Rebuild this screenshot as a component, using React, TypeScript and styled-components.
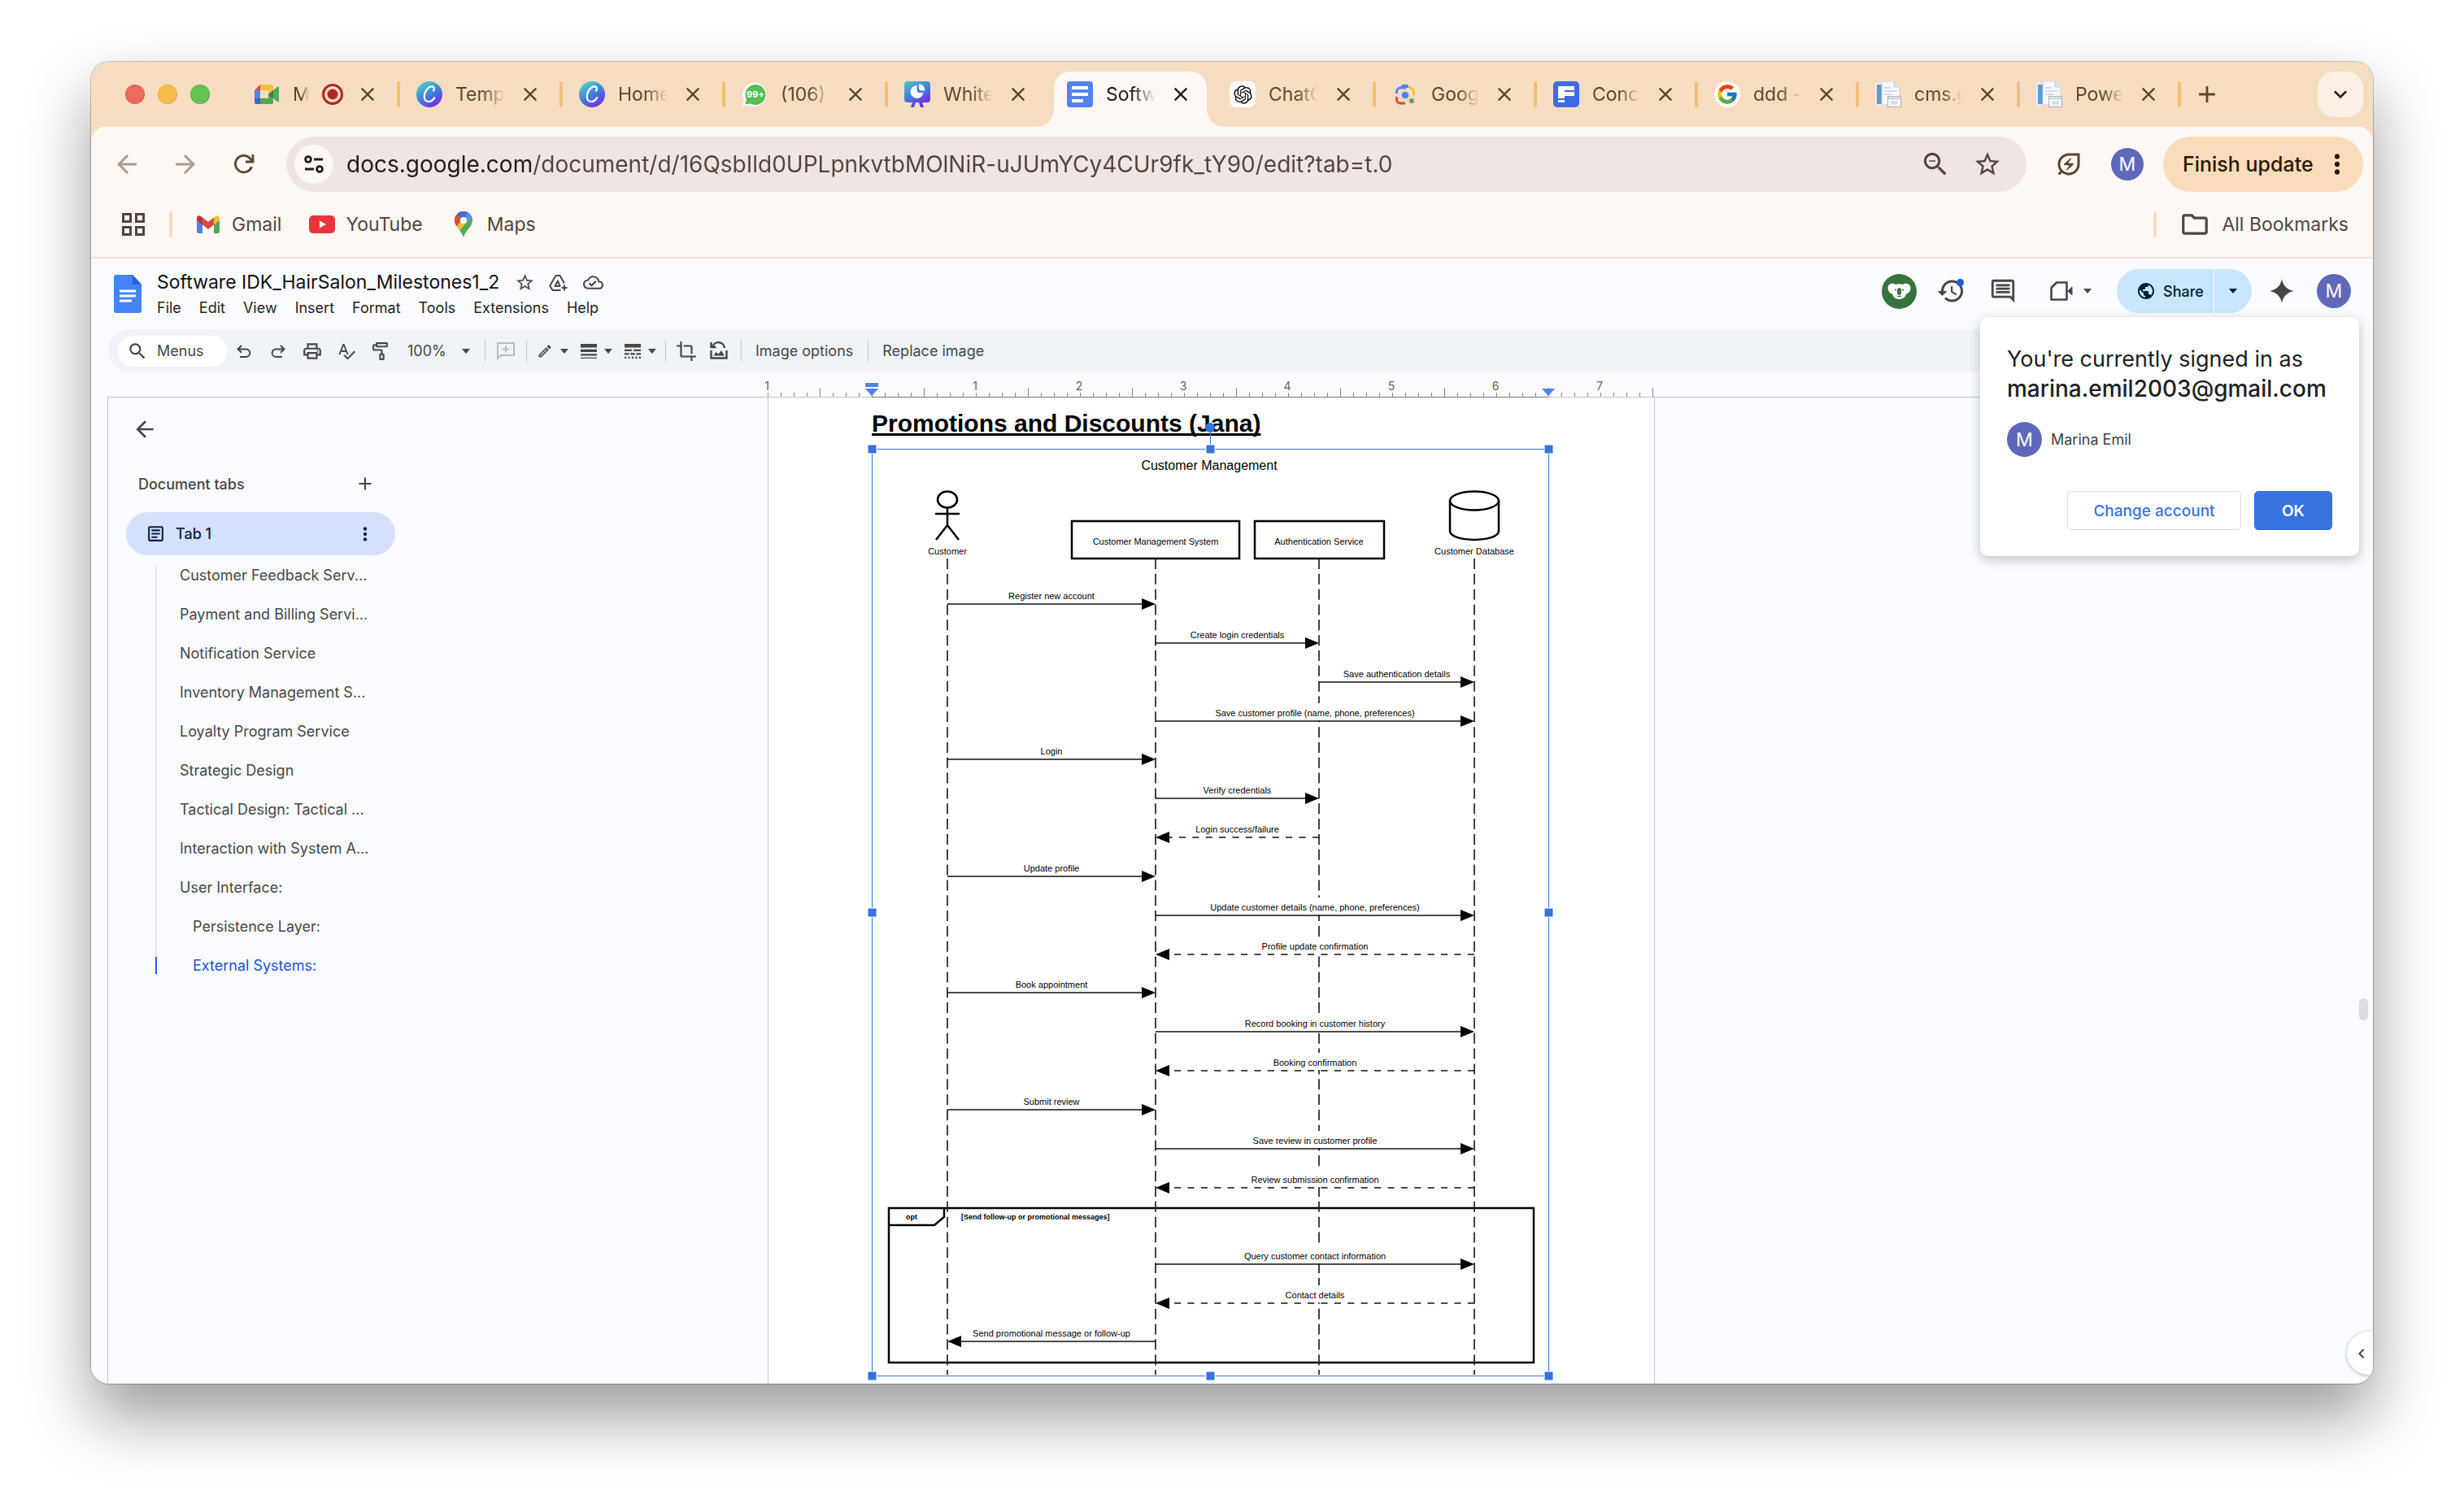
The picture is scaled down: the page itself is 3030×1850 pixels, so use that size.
import React from 'react';
import styled, { createGlobalStyle } from 'styled-components';
import {
  MdAdd, MdArrowBack, MdArrowForward, MdChevronLeft, MdClose, MdCrop, MdHistory, MdKeyboardArrowDown,
  MdLineStyle, MdLineWeight, MdMoreVert, MdOutlineArticle, MdOutlineCloudDone,
  MdOutlineEdit, MdOutlineEnergySavingsLeaf, MdOutlineFolder, MdOutlineImagesearchRoller,
  MdOutlineInsertComment, MdOutlinePrint, MdOutlineZoomOut, MdPublic, MdSearch, MdSpellcheck,
  MdStarBorder,
} from 'react-icons/md';
import { FcGoogle } from 'react-icons/fc';
import { RiOpenaiFill } from 'react-icons/ri';

const ui = '"Inter", "Roboto", sans-serif';
const doc = '"Liberation Sans", Arial, sans-serif';

const GlobalStyle = createGlobalStyle`
  * { box-sizing: border-box; }
  body { margin: 0; background: #fff; font-family: ${ui}; }
  button, input, select { font: inherit; color: inherit; border: 0; background: none; padding: 0; margin: 0; }
  button { cursor: pointer; }
  a { color: inherit; text-decoration: none; }
  svg { display: block; flex: none; }
`;

/* ---------- window ---------- */

const Desktop = styled.div`
  min-height: 100vh;
  padding: 76px 112px 148px;
  display: flex;
`;

const Window = styled.div`
  position: relative;
  flex: 1;
  min-width: 0;
  height: calc(100vh - 224px);
  display: flex;
  flex-direction: column;
  overflow: hidden;
  border-radius: 22px;
  background: #f6ddc1;
`;

const Shadow = styled.div`
  flex: 1;
  min-width: 0;
  border-radius: 22px;
  display: flex;
  box-shadow: 0 0 0 1px rgba(0, 0, 0, 0.22), 0 40px 80px rgba(0, 0, 0, 0.4);
`;

/* ---------- tab strip ---------- */

const TabStrip = styled.div`
  height: 80px;
  padding: 0 12px 0 42px;
  display: flex;
  align-items: center;
  color: #5b4631;
`;

const Lights = styled.div`
  display: flex;
  gap: 16px;
  width: 138px;
`;

const Light = styled.button<{ $color: string }>`
  width: 24px;
  height: 24px;
  border-radius: 50%;
  background: ${(p) => p.$color};
  box-shadow: inset 0 0 0 1px rgba(0, 0, 0, 0.1);
`;

const Tabs = styled.div`
  display: flex;
  height: 80px;
`;

const Tab = styled.div<{ $active?: boolean; $line: boolean }>`
  position: relative;
  width: 200px;
  padding-left: 20px;
  display: flex;
  align-items: center;
  color: ${(p) => (p.$active ? '#221b16' : 'inherit')};

  &:nth-child(n + 8) { width: 198px; }

  &::after {
    content: '';
    width: 4px;
    height: 32px;
    border-radius: 2px;
    background: ${(p) => (p.$line ? '#f4bc76' : 'transparent')};
  }
`;

const ActiveShape = styled.div`
  position: absolute;
  left: 4px;
  right: 8px;
  top: 12px;
  bottom: 0;
  border-radius: 20px 20px 0 0;
  background: #fef8f4;

  &::before, &::after {
    content: '';
    position: absolute;
    bottom: 0;
    width: 20px;
    height: 20px;
  }
  &::before { right: 100%; background: radial-gradient(circle at 0 0, transparent 19px, #fef8f4 20px); }
  &::after { left: 100%; background: radial-gradient(circle at 100% 0, transparent 19px, #fef8f4 20px); }
`;

const TabLabel = styled.button`
  position: relative;
  flex: 1;
  min-width: 0;
  display: flex;
  align-items: center;
  gap: 16px;
  font-size: 23px;
  line-height: 32px;
  text-align: left;
`;

const TabText = styled.span`
  flex: 1;
  min-width: 0;
  overflow: hidden;
  white-space: nowrap;
  mask-image: linear-gradient(90deg, #000 55%, transparent 98%);
`;

const CloseTab = styled.button`
  position: relative;
  width: 28px;
  height: 28px;
  margin: 0 22px 0 16px;
`;

const NewTab = styled.button`
  width: 64px;
  display: flex;
  justify-content: center;
`;

const TabSearch = styled.button`
  width: 56px;
  height: 56px;
  margin-left: auto;
  border-radius: 20px;
  display: flex;
  align-items: center;
  justify-content: center;
  background: #fcefe3;
  color: #221b16;
`;

/* ---------- browser toolbar ---------- */

const Chrome = styled.div`
  border-radius: 18px 18px 0 0;
  border-bottom: 2px solid #f2e1d3;
  background: #fef8f4;
`;

const NavRow = styled.div`
  display: flex;
  align-items: center;
  padding: 12px 12px 0 8px;
  color: #594431;
`;

const IconButton = styled.button<{ $w: number; $dim?: boolean }>`
  width: ${(p) => p.$w}px;
  flex: none;
  display: flex;
  align-items: center;
  justify-content: center;
  opacity: ${(p) => (p.$dim ? 0.5 : 1)};
`;

const Omnibox = styled.div`
  flex: 1;
  height: 68px;
  margin: 0 16px;
  padding: 0 16px 0 10px;
  display: flex;
  align-items: center;
  border-radius: 34px;
  background: #efe6e4;
  color: #51443f;
`;

const SiteInfo = styled.button`
  width: 48px;
  height: 48px;
  margin-right: 16px;
  border-radius: 50%;
  display: flex;
  align-items: center;
  justify-content: center;
  background: #fef8f4;
  color: #221b16;
`;

const Address = styled.input`
  flex: 1;
  min-width: 0;
  font-size: 28px;
  line-height: 40px;
  outline: 0;
  background: linear-gradient(90deg, #201a17 227px, #51443f 227px);
  background-clip: text;
  -webkit-text-fill-color: transparent;
`;

const Avatar = styled.span<{ $size: number }>`
  width: ${(p) => p.$size}px;
  height: ${(p) => p.$size}px;
  flex: none;
  border-radius: 50%;
  display: flex;
  align-items: center;
  justify-content: center;
  background: #5f68ba;
  color: #fff;
  font-size: 23px;
  line-height: 28px;
`;

const UpdatePill = styled.button`
  height: 68px;
  margin-left: 8px;
  width: 246px;
  padding: 0 13px 0 24px;
  display: flex;
  align-items: center;
  justify-content: space-between;
  border-radius: 34px;
  background: #f9dcbb;
  color: #2c1600;
  font-size: 25px;
  font-weight: 500;
  white-space: nowrap;
`;

const Bookmarks = styled.nav`
  height: 80px;
  padding: 0 30px 0 38px;
  display: flex;
  align-items: center;
  color: #51443f;
  font-size: 23px;
`;

const BookmarkLine = styled.span`
  width: 4px;
  height: 32px;
  margin: 0 28px 0 30px;
  border-radius: 2px;
  background: #f9dcbb;
`;

const Bookmark = styled.a`
  display: flex;
  align-items: center;
  gap: 13px;
  margin-right: 34px;
`;

const AllBookmarks = styled.button`
  display: flex;
  align-items: center;
  gap: 14px;
`;

const Spacer = styled.span`
  flex: 1;
`;

/* ---------- docs header ---------- */

const Docs = styled.div`
  position: relative;
  flex: 1;
  min-height: 0;
  display: flex;
  flex-direction: column;
  background: #fafbfe;
  color: #444746;
`;

const Header = styled.header`
  height: 87px;
  padding: 0 27px 0 28px;
  display: flex;
  align-items: flex-start;
`;

const Logo = styled.a`
  margin-top: 20px;
  margin-right: 19px;
`;

const Titles = styled.div`
  margin-top: 14px;
  flex: 1;
`;

const TitleRow = styled.div`
  height: 31px;
  display: flex;
  align-items: center;
`;

const Title = styled.h1`
  margin: 0 10px 0 0;
  color: #111;
  font-size: 23px;
  line-height: 31px;
  font-weight: 400;
`;

const MenuBar = styled.nav`
  height: 31px;
  display: flex;
  align-items: center;
  gap: 22px;
  color: #1f1f1f;
  font-size: 18px;
`;

const Actions = styled.div`
  margin-top: 13px;
  height: 54px;
  display: flex;
  align-items: center;
`;

const MeetButton = styled.button`
  margin: 0 31px 0 26px;
  display: flex;
  align-items: center;
  gap: 13px;
`;

const ShareGroup = styled.div`
  height: 54px;
  display: flex;
  overflow: hidden;
  border-radius: 27px;
  background: #c9e6fc;
  color: #001d35;
`;

const ShareButton = styled.button`
  width: 120px;
  padding-left: 24px;
  display: flex;
  align-items: center;
  gap: 9px;
  border-right: 1px solid #fff;
  font-size: 18px;
  font-weight: 500;
`;

const ShareMore = styled.button`
  width: 46px;
  display: flex;
  align-items: center;
  justify-content: center;
`;

const SparkButton = styled.button`
  margin: 0 28px 0 22px;
`;

/* ---------- docs toolbar ---------- */

const Toolbar = styled.div`
  height: 53px;
  margin: 0 24px 0 21px;
  padding-left: 12px;
  display: flex;
  align-items: center;
  border-radius: 27px;
  background: #f0f3f8;
  font-size: 18px;
`;

const MenuSearch = styled.button`
  width: 134px;
  height: 38px;
  padding-left: 11px;
  display: flex;
  align-items: center;
  gap: 11px;
  border-radius: 19px;
  background: #fff;
  color: #444746;
`;

const Zoom = styled.label`
  margin: 0 18px 0 12px;
  display: flex;
  align-items: center;
`;

const ZoomSelect = styled.select`
  width: 67px;
  appearance: none;
  outline: 0;
`;

const Rule = styled.span`
  width: 1px;
  height: 27px;
  background: #c7c9cc;
`;

const StyleGroup = styled.div`
  display: flex;
  gap: 15px;
  padding: 0 11px 0 12px;
`;

const StyleButton = styled.button`
  display: flex;
  align-items: center;
  gap: 9px;
`;

const ImageTools = styled.div`
  display: flex;
  padding: 0 7px 0 5px;
`;

const TextTool = styled.button`
  padding: 0 18px 0 17px;
  white-space: nowrap;
`;

/* ---------- workspace ---------- */

const RulerRow = styled.div`
  display: grid;
  grid-template-columns: 1fr 1091px 1fr;
  margin: 0 24px 0 20px;
  padding-right: 47px;
  border-bottom: 1px solid #c0c2c5;
`;

const RulerSlot = styled.div`
  grid-column: 2;
  height: 30px;
`;

const RulerDrawing = styled.svg`
  overflow: visible;
  font-family: ${ui};
`;

const Workspace = styled.div`
  flex: 1;
  min-height: 0;
  display: grid;
  grid-template-columns: 1fr 1091px 1fr;
  margin-left: 20px;
  padding-right: 71px;
  overflow: hidden;
`;

const Sidebar = styled.aside`
  border-left: 1px solid #c0c2c5;
  padding: 20px 0 0 22px;
`;

const BackRow = styled.div`
  height: 38px;
  display: flex;
  align-items: center;
  padding-left: 7px;
`;

const TabsHeading = styled.div`
  width: 331px;
  height: 38px;
  margin-top: 29px;
  padding: 0 24px 0 15px;
  display: flex;
  align-items: center;
  justify-content: space-between;
`;

const SidebarTitle = styled.h2`
  margin: 0;
  font-size: 18px;
  font-weight: 500;
`;

const DocTab = styled.div`
  width: 331px;
  height: 53px;
  margin-top: 16px;
  padding: 0 24px 0 24px;
  display: flex;
  align-items: center;
  gap: 12px;
  border-radius: 27px;
  background: #d5e0fb;
  color: #041e49;
  font-size: 18px;
  font-weight: 500;
`;

const Outline = styled.ul`
  margin: 0;
  padding: 0 0 0 36px;
  list-style: none;
`;

const OutlineItem = styled.li<{ $sub?: boolean; $current?: boolean }>`
  height: 48px;
  display: flex;
  align-items: center;
  gap: ${(p) => (p.$sub ? 44 : 28)}px;
  color: ${(p) => (p.$current ? '#1f52cc' : 'inherit')};
  font-size: 18px;

  &::before {
    content: '';
    width: 2px;
    height: 48px;
    background: ${(p) => (p.$current
    ? 'linear-gradient(#e1e3e6 14px, #2a5bd0 14px 35px, transparent 35px)'
    : '#e1e3e6')};
  }
  &:first-child::before { background: linear-gradient(transparent 14px, #e1e3e6 14px); }
`;

const Page = styled.main`
  padding: 14px 128px 0 127px;
  border: solid #c7c9cc;
  border-width: 0 1px;
  background: #fff;
`;

const DocHeading = styled.h3`
  margin: 0 0 13px;
  color: #000;
  font: bold 30px/36px ${doc};
  text-decoration: underline;
  text-decoration-thickness: 3px;
  text-underline-offset: 2px;
  text-decoration-skip-ink: none;
`;

const Drawing = styled.svg`
  width: 832px;
  height: 1140px;
  overflow: visible;
  font-family: ${doc};
`;

const ScrollThumb = styled.div`
  position: absolute;
  right: 6px;
  top: 910px;
  width: 11px;
  height: 27px;
  border-radius: 6px;
  background: #dadce1;
`;

const SidePanelButton = styled.button`
  position: absolute;
  right: 0;
  bottom: 11px;
  width: 32px;
  height: 53px;
  padding-left: 4px;
  display: flex;
  align-items: center;
  justify-content: center;
  border-radius: 27px 0 0 27px;
  background: #fff;
  box-shadow: 0 1px 4px rgba(60, 64, 67, 0.4);
`;

/* ---------- account dialog ---------- */

const Dialog = styled.section`
  position: absolute;
  top: 72px;
  right: 17px;
  width: 466px;
  padding: 33px 33px 32px;
  border-radius: 10px;
  background: #fff;
  box-shadow: 0 4px 14px rgba(60, 64, 67, 0.3);
  color: #202124;
`;

const DialogTitle = styled.p`
  margin: 0;
  font-size: 27px;
  line-height: 37px;
  white-space: nowrap;
`;

const Email = styled.strong`
  display: block;
  font-size: 28px;
  font-weight: 500;
`;

const Account = styled.div`
  margin: 22px 0 42px;
  display: flex;
  align-items: center;
  gap: 11px;
  color: #3c4043;
  font-size: 18px;
`;

const DialogButtons = styled.div`
  display: flex;
  justify-content: flex-end;
  gap: 16px;
`;

const DialogButton = styled.button<{ $primary?: boolean }>`
  width: ${(p) => (p.$primary ? 96 : 214)}px;
  height: 48px;
  border: 1px solid ${(p) => (p.$primary ? '#3871e0' : '#dadce0')};
  border-radius: 5px;
  background: ${(p) => (p.$primary ? '#3871e0' : '#fff')};
  color: ${(p) => (p.$primary ? '#fff' : '#3871e0')};
  font-size: 19px;
  font-weight: ${(p) => (p.$primary ? 600 : 500)};
`;

/* ---------- icons ---------- */

const Caret = () => (
  <svg width="10" height="6" viewBox="0 0 10 6" fill="currentColor"><path d="M0 0h10L5 6z" /></svg>
);

const MeetLogo = () => (
  <svg width="32" height="26" viewBox="0 0 32 26">
    <path d="M8 1v7H1z" fill="#d94b3f" />
    <path d="M1 8h7v10H1z" fill="#4f82f0" />
    <path d="M1 18h7v7H3a2 2 0 0 1-2-2z" fill="#3a66d0" />
    <path d="M8 1h14a2 2 0 0 1 2 2v7l-6 3V8H8z" fill="#f4bf3f" />
    <path d="M8 18h10v-5l6 3v7a2 2 0 0 1-2 2H8z" fill="#53a958" />
    <path d="M18 13l6-5v10z" fill="#3b7f43" />
    <path d="M24 8l5-4c1-.8 2-.3 2 1v16c0 1.300-1 1.800-2 1l-5-4z" fill="#53a958" />
  </svg>
);

const Recording = () => (
  <svg width="26" height="26" viewBox="0 0 26 26">
    <circle cx="13" cy="13" r="11.500" fill="none" stroke="#ae2b22" strokeWidth="3" />
    <circle cx="13" cy="13" r="6.500" fill="#ae2b22" />
  </svg>
);

const CanvaLogo = () => (
  <svg width="32" height="32" viewBox="0 0 32 32">
    <defs>
      <linearGradient id="canva" x1="0.200" y1="0" x2="0.800" y2="1">
        <stop offset="0.100" stopColor="#4cc3c9" />
        <stop offset="0.550" stopColor="#4378dc" />
        <stop offset="1" stopColor="#7526e8" />
      </linearGradient>
    </defs>
    <circle cx="16" cy="16" r="16" fill="url(#canva)" />
    <path d="M21 11.500c1.800-2.600.8-5.200-2-5.200-4.600 0-9.200 6.400-9.200 12.200 0 4 2 6.500 5.200 6.500 3 0 5.600-2 7.200-4.900" fill="none" stroke="#fff" strokeWidth="2.200" strokeLinecap="round" />
  </svg>
);

const WhatsAppLogo = () => (
  <svg width="32" height="32" viewBox="0 0 32 32">
    <path d="M1 31l2-8A14.500 14.500 0 1 1 10 29.500z" fill="#fff" />
    <path d="M4 28.500l2-6A12.500 12.500 0 1 1 11 27.500z" fill="#55bd54" />
    <text x="17" y="20" fill="#fff" fontFamily={ui} fontSize="11" fontWeight="700" textAnchor="middle">99+</text>
  </svg>
);

const BoardLogo = () => (
  <svg width="32" height="32" viewBox="0 0 32 32">
    <defs>
      <linearGradient id="board" x1="0.100" y1="0" x2="0.600" y2="1">
        <stop offset="0" stopColor="#4cc3c9" />
        <stop offset="0.550" stopColor="#4378dc" />
        <stop offset="1" stopColor="#7526e8" />
      </linearGradient>
    </defs>
    <path d="M4 0h24a4 4 0 0 1 4 4v18a4 4 0 0 1-4 4h-6l2 6h-4l-2-6h-4l-2 6H8l2-6H4a4 4 0 0 1-4-4V4a4 4 0 0 1 4-4z" fill="url(#board)" />
    <path d="M15.500 5a8 8 0 1 0 8 9h-6l-2-2z" fill="#fff" />
    <path d="M18 3.500c4 0 7.500 3.500 7.500 8H20l-2-2z" fill="#fff" />
  </svg>
);

const DocsFavicon = () => (
  <svg width="32" height="32" viewBox="0 0 32 32">
    <rect width="32" height="32" rx="4" fill="#5383ec" />
    <path d="M6 6h20v4H6zM6 14h20v4H6zM6 22h14v4H6z" fill="#fff" />
  </svg>
);

const OpenAiBox = styled.span`
  width: 32px;
  height: 32px;
  flex: none;
  display: flex;
  align-items: center;
  justify-content: center;
  border-radius: 8px;
  background: #fff;
  color: #111;
`;

const GoogleBox = styled(OpenAiBox)`
  border-radius: 50%;
`;

const LensLogo = () => (
  <svg width="32" height="32" viewBox="0 0 32 32" fill="none" strokeWidth="3">
    <path d="M5.500 15v-2a5 5 0 0 1 5-5H17" stroke="#4f82f0" />
    <path d="M10 8l2-4h7l2 4z" fill="#4f82f0" />
    <path d="M21 8a5.500 5.500 0 0 1 5.500 5.500V17" stroke="#f4bf3f" />
    <path d="M5.500 19v3.500a4.500 4.500 0 0 0 4.500 4.500h6" stroke="#d94b3f" />
    <circle cx="16" cy="17" r="4.300" fill="#4f82f0" />
    <circle cx="24" cy="24" r="3" fill="#53a958" />
  </svg>
);

const BlockFLogo = () => (
  <svg width="32" height="32" viewBox="0 0 32 32">
    <rect width="32" height="32" rx="5" fill="#4169e1" />
    <path d="M6 6h20v5H14v2h12v5H14v3H6zM6 23h8v3H6z" fill="#fff" />
  </svg>
);

const FileFavicon = () => (
  <svg width="32" height="32" viewBox="0 0 32 32">
    <path d="M0 2h14v28H0z" fill="#e9eef5" />
    <path d="M2 4h6v24H2z" fill="#5b9bd0" />
    <path d="M8 0h15l7 7v22H8z" fill="#f7f9fc" stroke="#c5ccd8" />
    <path d="M23 0v7h7" fill="#e1e6ee" stroke="#c5ccd8" />
    <path d="M11 8h8M11 12h16M11 16h10" stroke="#d6dce6" strokeWidth="2" />
    <rect x="15.500" y="18.500" width="16" height="13" fill="#f3f5f9" stroke="#a9b1bf" />
    <path d="M16 21h15" stroke="#c5ccd8" strokeWidth="2" />
    <path d="M20 25h7v3h-7z" fill="#dfe4ec" stroke="#c5ccd8" />
  </svg>
);

const ReloadIcon = () => (
  <svg width="26" height="26" viewBox="0 0 26 26" fill="none" stroke="currentColor" strokeWidth="2.800">
    <path d="M22.500 16A10.300 10.300 0 1 1 20.500 5.800L24 9.500" />
    <path d="M24 1v9h-9" />
  </svg>
);

const TuneIcon = () => (
  <svg width="26" height="26" viewBox="0 0 26 26" fill="none" stroke="currentColor" strokeWidth="2.800">
    <circle cx="6" cy="7" r="3.400" /><path d="M13 7h11" />
    <circle cx="20" cy="19" r="3.400" /><path d="M2 19h11" />
  </svg>
);

const AppsIcon = () => (
  <svg width="28" height="28" viewBox="0 0 28 28" fill="none" stroke="currentColor" strokeWidth="3">
    <path d="M1.500 1.500h9v9h-9zM17.500 1.500h9v9h-9zM1.500 17.500h9v9h-9zM17.500 17.500h9v9h-9z" />
  </svg>
);

const GmailLogo = () => (
  <svg width="32" height="24" viewBox="0 0 32 24">
    <path d="M2 5l7 5v13H4a2 2 0 0 1-2-2z" fill="#4f82f0" />
    <path d="M30 5l-7 5v13h5a2 2 0 0 0 2-2z" fill="#53a958" />
    <path d="M23 3.500l2-1.500c2.200-1.600 5-.2 5 2.500V7l-7 5.500z" fill="#f4bf3f" />
    <path d="M9 12.500V3.500l7 5.500 7-5.500v9L16 18z" fill="#d94b3f" />
    <path d="M2 7V4.500C2 1.800 4.800.4 7 2l2 1.500v9z" fill="#b8352c" />
  </svg>
);

const YouTubeLogo = () => (
  <svg width="32" height="22" viewBox="0 0 32 22">
    <rect width="32" height="22" rx="5" fill="#ea3540" />
    <path d="M13 6.500v9l8-4.500z" fill="#fff" />
  </svg>
);

const MapsLogo = () => (
  <svg width="32" height="32" viewBox="0 0 32 32">
    <clipPath id="pin"><path d="M16 0a11 11 0 0 0-11 11c0 8 8 11 11 21 3-10 11-13 11-21A11 11 0 0 0 16 0z" /></clipPath>
    <g clipPath="url(#pin)">
      <path d="M0 0h32v32H0z" fill="#53a958" />
      <path d="M0 22L24 -2H0z" fill="#d94b3f" />
      <path d="M5 22L17 7l5 4L9 26z" fill="#f4bf3f" />
      <path d="M7 3l9 7 10-6-6-5H9z" fill="#3b6fd8" />
      <path d="M16 11L22 0l8 6-2 2-9 5z" fill="#5c8ff0" />
      <path d="M0 16V5l5-1 9 6-8 9z" fill="#d94b3f" />
    </g>
    <circle cx="16" cy="11" r="4" fill="#fff" />
  </svg>
);

const DocsLogo = () => (
  <svg width="34" height="47" viewBox="0 0 34 47">
    <path d="M3 0h20l11 12v32a3 3 0 0 1-3 3H3a3 3 0 0 1-3-3V3a3 3 0 0 1 3-3z" fill="#4583f6" />
    <path d="M23 0l11 12H23z" fill="#2a62d4" />
    <path d="M7 18.500h20v3H7zM7 24.500h20v3H7zM7 30.500h15v3H7z" fill="#fff" />
  </svg>
);

const AddToDriveIcon = () => (
  <svg width="24" height="20" viewBox="0 0 24 20" fill="none" stroke="currentColor" strokeWidth="2" strokeLinejoin="round">
    <path d="M14.500 19H4.500L1.200 13.500 8.500 1h5l5.500 9.500" />
    <path d="M13.500 14H7.500L11 7.500z" />
    <path d="M19 12.500v7M15.500 16h7" />
  </svg>
);

const KoalaBadge = () => (
  <svg width="43" height="43" viewBox="0 0 43 43">
    <circle cx="21.500" cy="21.500" r="21.500" fill="#37733c" />
    <path d="M17 13c2.500-1 6.500-1 9 0 2.500-2.500 9.500-1.500 9.500 4 0 4-3 7.500-5.500 7.500-1 4.500-4.500 6.500-8.500 6.500s-7.500-2-8.500-6.500c-2.500 0-5.500-3.500-5.500-7.500 0-5.500 7-6.500 9.500-4z" fill="#fff" />
    <ellipse cx="21.500" cy="21.500" rx="2.600" ry="4.500" fill="#37733c" />
    <circle cx="17" cy="19.500" r="1.100" fill="#37733c" /><circle cx="26" cy="19.500" r="1.100" fill="#37733c" />
    <path d="M19 27.500h5" stroke="#37733c" strokeWidth="1.200" />
  </svg>
);

const HistoryWrap = styled.span`
  position: relative;
  display: block;

  &::after {
    content: '';
    position: absolute;
    top: 3px;
    right: 2px;
    width: 9px;
    height: 9px;
    border-radius: 50%;
    background: #2456d6;
  }
`;

const MeetIcon = () => (
  <svg width="28" height="24" viewBox="0 0 28 24" fill="none" stroke="currentColor" strokeWidth="2.600" strokeLinejoin="round">
    <path d="M8 1.500h12.500v21h-19V8z" />
    <path d="M22 12l5-5v10z" fill="currentColor" strokeWidth="1" />
  </svg>
);

const SparkIcon = () => (
  <svg width="30" height="30" viewBox="0 0 30 30" fill="currentColor">
    <path d="M15 0c1.500 8.500 6.500 13.500 15 15-8.500 1.500-13.500 6.500-15 15C13.500 21.500 8.500 16.500 0 15 8.500 13.500 13.500 8.500 15 0z" />
  </svg>
);

const UndoIcon = () => (
  <svg width="18" height="18" viewBox="0 0 18 18" fill="none" stroke="currentColor" strokeWidth="2">
    <path d="M4 16h7.500a4.800 4.800 0 0 0 0-9.600H2M6 2L1.600 6.400 6 10.800" />
  </svg>
);

const RedoIcon = () => (
  <svg width="18" height="18" viewBox="0 0 18 18" fill="none" stroke="currentColor" strokeWidth="2">
    <path d="M14 16H6.500a4.800 4.800 0 0 1 0-9.600H16M12 2l4.400 4.400L12 10.800" />
  </svg>
);

const AddCommentIcon = () => (
  <svg width="22" height="22" viewBox="0 0 22 22" fill="none" stroke="#b9bcc0" strokeWidth="2">
    <path d="M1 20V1h20v15H5zM11 4.500v8M7 8.500h8" />
  </svg>
);

const ResetImageIcon = () => (
  <svg width="24" height="24" viewBox="0 0 24 24" fill="none" stroke="currentColor" strokeWidth="2.400">
    <path d="M2.500 11v9.500h19V11M19 8A7.500 7.500 0 0 0 4.500 6M2.500 1v6h6" />
    <path d="M5.500 17.500l3-4.500 3 2.500 3.500-4.500 4 6.500z" fill="currentColor" stroke="none" />
  </svg>
);

/* ---------- ruler ---------- */

const Ruler = () => {
  const ticks = Array.from({ length: 69 }, (_, i) => i);
  return (
    <RulerDrawing width="1091" height="31" viewBox="0 0 1091 31" fontSize="14" textAnchor="middle">
      {ticks.filter((i) => i % 8 !== 4).map((i) => (
        <path key={i} d={`M${i * 16 + 0.5} 25v5`} stroke="#85888b" />
      ))}
      {ticks.filter((i) => i % 8 === 4).map((i) => (
        <path key={i} d={`M${i * 16 + 0.5} 19v11`} stroke="#85888b" />
      ))}
      <path d="M128 30.500h832" stroke="#747775" />
      {[0, 2, 3, 4, 5, 6, 7, 8].map((i) => (
        <text key={i} x={i * 128 - 1} y="22" fill="#5f6368">{i === 0 ? 1 : i - 1}</text>
      ))}
      <path d="M120 13h16v5h-16zM120 20h16l-8 9zM952 20h16l-8 9z" fill="#4f82f0" />
    </RulerDrawing>
  );
};

/* ---------- sequence diagram ---------- */

const CUSTOMER = 93;
const SYSTEM = 349;
const AUTH = 550;
const DATABASE = 741;

type Message = { y: number; from: number; to: number; text: string; reply?: boolean };

const messages: Message[] = [
  { y: 191, from: CUSTOMER, to: SYSTEM, text: 'Register new account' },
  { y: 239, from: SYSTEM, to: AUTH, text: 'Create login credentials' },
  { y: 287, from: AUTH, to: DATABASE, text: 'Save authentication details' },
  { y: 335, from: SYSTEM, to: DATABASE, text: 'Save customer profile (name, phone, preferences)' },
  { y: 382, from: CUSTOMER, to: SYSTEM, text: 'Login' },
  { y: 430, from: SYSTEM, to: AUTH, text: 'Verify credentials' },
  { y: 478, from: AUTH, to: SYSTEM, text: 'Login success/failure', reply: true },
  { y: 526, from: CUSTOMER, to: SYSTEM, text: 'Update profile' },
  { y: 574, from: SYSTEM, to: DATABASE, text: 'Update customer details (name, phone, preferences)' },
  { y: 622, from: DATABASE, to: SYSTEM, text: 'Profile update confirmation', reply: true },
  { y: 669, from: CUSTOMER, to: SYSTEM, text: 'Book appointment' },
  { y: 717, from: SYSTEM, to: DATABASE, text: 'Record booking in customer history' },
  { y: 765, from: DATABASE, to: SYSTEM, text: 'Booking confirmation', reply: true },
  { y: 813, from: CUSTOMER, to: SYSTEM, text: 'Submit review' },
  { y: 861, from: SYSTEM, to: DATABASE, text: 'Save review in customer profile' },
  { y: 909, from: DATABASE, to: SYSTEM, text: 'Review submission confirmation', reply: true },
  { y: 1003, from: SYSTEM, to: DATABASE, text: 'Query customer contact information' },
  { y: 1051, from: DATABASE, to: SYSTEM, text: 'Contact details', reply: true },
  { y: 1098, from: SYSTEM, to: CUSTOMER, text: 'Send promotional message or follow-up' },
];

const MessageArrow = ({ y, from, to, text, reply }: Message) => {
  const dir = Math.sign(to - from);
  const crossesAuth = Math.abs(to - from) > 300;
  return (
    <g>
      {crossesAuth && <rect x={AUTH - 4} y={y - 22} width="8" height="21" fill="#fff" />}
      <path
        d={`M${from} ${y}H${to - dir * 16}`}
        stroke="#111"
        strokeWidth="1.600"
        strokeDasharray={reply ? '8.200 8.200' : undefined}
      />
      <path d={`M${to} ${y}l${-dir * 17} -7v14z`} fill="#000" />
      <text x={(from + to) / 2} y={y - 6} fontSize="11" textAnchor="middle">{text}</text>
    </g>
  );
};

const handles = [[0, 0], [416, 0], [832, 0], [0, 570], [832, 570], [0, 1140], [416, 1140], [832, 1140]];

const SequenceDiagram = () => (
  <Drawing viewBox="0 0 832 1140" role="img" aria-label="Customer Management sequence diagram">
    <text x="415" y="26" fontSize="16" textAnchor="middle">Customer Management</text>

    <g fill="none" stroke="#000" strokeWidth="2.500">
      <ellipse cx={CUSTOMER} cy="62.500" rx="12" ry="10" />
      <path d="M93 73v21M78 80h30M93 94L79 112M93 94l14 18" />
      <rect x="246" y="89" width="206" height="46" />
      <rect x="471" y="89" width="159" height="46" />
      <ellipse cx={DATABASE} cy="64" rx="30" ry="11.500" />
      <path d="M711 64v37c0 14.500 60 14.500 60 0V64" />
      <rect x="21" y="934" width="793" height="190" />
      <path d="M21 955h56l12-10v-11" />
    </g>

    {[CUSTOMER, SYSTEM, AUTH, DATABASE].map((x) => (
      <path key={x} d={`M${x} 135V1139`} stroke="#222" strokeWidth="1.700" strokeDasharray="13 5.830" />
    ))}

    <g fontSize="11" textAnchor="middle">
      <text x={CUSTOMER} y="130">Customer</text>
      <text x={SYSTEM} y="118">Customer Management System</text>
      <text x={AUTH} y="118">Authentication Service</text>
      <text x={DATABASE} y="130">Customer Database</text>
    </g>
    <g fontSize="9" fontWeight="700">
      <text x="42" y="948">opt</text>
      <text x="110" y="948">[Send follow-up or promotional messages]</text>
    </g>

    {messages.map((m) => <MessageArrow key={m.y} {...m} />)}

    <g>
      <rect x="0.500" y="0.500" width="832" height="1140" fill="none" stroke="#3871e0" />
      <path d="M416.500 0V-26" stroke="#3871e0" />
      <circle cx="416" cy="-26" r="6" fill="#3871e0" />
      {handles.map(([x, y]) => (
        <rect key={`${x}-${y}`} x={x - 5} y={y - 5} width="11" height="11" fill="#3871e0" stroke="#fff" />
      ))}
    </g>
  </Drawing>
);

/* ---------- data ---------- */

const tabs = [
  { icon: <MeetLogo />, text: 'M', extra: <Recording />, line: true },
  { icon: <CanvaLogo />, text: 'Temp', line: true },
  { icon: <CanvaLogo />, text: 'Home', line: true },
  { icon: <WhatsAppLogo />, text: '(106)', line: true },
  { icon: <BoardLogo />, text: 'White', line: false },
  { icon: <DocsFavicon />, text: 'Softw', line: false, active: true },
  { icon: <OpenAiBox><RiOpenaiFill size={27} /></OpenAiBox>, text: 'ChatG', line: true },
  { icon: <LensLogo />, text: 'Goog', line: true },
  { icon: <BlockFLogo />, text: 'Conc', line: true },
  { icon: <GoogleBox><FcGoogle size={28} /></GoogleBox>, text: 'ddd -', line: true },
  { icon: <FileFavicon />, text: 'cms.g', line: true },
  { icon: <FileFavicon />, text: 'Powe', line: true },
];

const menus = ['File', 'Edit', 'View', 'Insert', 'Format', 'Tools', 'Extensions', 'Help'];

const outline = [
  { text: 'Customer Feedback Serv...' },
  { text: 'Payment and Billing Servi...' },
  { text: 'Notification Service' },
  { text: 'Inventory Management S...' },
  { text: 'Loyalty Program Service' },
  { text: 'Strategic Design' },
  { text: 'Tactical Design: Tactical ...' },
  { text: 'Interaction with System A...' },
  { text: 'User Interface:' },
  { text: 'Persistence Layer:', sub: true },
  { text: 'External Systems:', sub: true, current: true },
];

const url = 'docs.google.com/document/d/16QsbIld0UPLpnkvtbMOlNiR-uJUmYCy4CUr9fk_tY90/edit?tab=t.0';

/* ---------- app ---------- */

const BrowserTabs = () => (
  <TabStrip>
    <Lights>
      <Light $color="#ed6a5e" aria-label="Close window" />
      <Light $color="#f4bf4f" aria-label="Minimise window" />
      <Light $color="#61c554" aria-label="Zoom window" />
    </Lights>
    <Tabs>
      {tabs.map((t, i) => (
        <Tab key={i} $active={t.active} $line={t.line}>
          {t.active && <ActiveShape />}
          <TabLabel>
            {t.icon}
            <TabText>{t.text}</TabText>
            {t.extra}
          </TabLabel>
          <CloseTab aria-label={`Close ${t.text}`}><MdClose size={28} /></CloseTab>
        </Tab>
      ))}
    </Tabs>
    <NewTab aria-label="New tab"><MdAdd size={34} /></NewTab>
    <TabSearch aria-label="Search tabs"><MdKeyboardArrowDown size={32} /></TabSearch>
  </TabStrip>
);

const BrowserToolbar = () => (
  <Chrome>
    <NavRow>
      <IconButton $w={72} $dim aria-label="Back"><MdArrowBack size={36} /></IconButton>
      <IconButton $w={72} $dim aria-label="Forward"><MdArrowForward size={36} /></IconButton>
      <IconButton $w={72} aria-label="Reload"><ReloadIcon /></IconButton>
      <Omnibox>
        <SiteInfo aria-label="Site information"><TuneIcon /></SiteInfo>
        <Address aria-label="Address" defaultValue={url} />
        <IconButton $w={64} aria-label="Zoom out"><MdOutlineZoomOut size={38} /></IconButton>
        <IconButton $w={64} aria-label="Bookmark this page"><MdStarBorder size={36} /></IconButton>
      </Omnibox>
      <IconButton $w={72} aria-label="Energy saver"><MdOutlineEnergySavingsLeaf size={36} /></IconButton>
      <IconButton $w={72} aria-label="Profile"><Avatar $size={40}>M</Avatar></IconButton>
      <UpdatePill>Finish update<MdMoreVert size={38} /></UpdatePill>
    </NavRow>
    <Bookmarks>
      <button aria-label="Apps"><AppsIcon /></button>
      <BookmarkLine />
      <Bookmark href="#gmail"><GmailLogo />Gmail</Bookmark>
      <Bookmark href="#youtube"><YouTubeLogo />YouTube</Bookmark>
      <Bookmark href="#maps"><MapsLogo />Maps</Bookmark>
      <Spacer />
      <BookmarkLine />
      <AllBookmarks><MdOutlineFolder size={38} />All Bookmarks</AllBookmarks>
    </Bookmarks>
  </Chrome>
);

const DocsHeader = () => (
  <Header>
    <Logo href="#home" aria-label="Docs home"><DocsLogo /></Logo>
    <Titles>
      <TitleRow>
        <Title>Software IDK_HairSalon_Milestones1_2</Title>
        <IconButton $w={42} aria-label="Star"><MdStarBorder size={25} /></IconButton>
        <IconButton $w={42} aria-label="Add to Drive"><AddToDriveIcon /></IconButton>
        <IconButton $w={42} aria-label="Saved to Drive"><MdOutlineCloudDone size={25} /></IconButton>
      </TitleRow>
      <MenuBar>{menus.map((m) => <button key={m}>{m}</button>)}</MenuBar>
    </Titles>
    <Actions>
      <IconButton $w={64} aria-label="Extension"><KoalaBadge /></IconButton>
      <IconButton $w={64} aria-label="Version history"><HistoryWrap><MdHistory size={36} /></HistoryWrap></IconButton>
      <IconButton $w={64} aria-label="Comments"><MdOutlineInsertComment size={34} /></IconButton>
      <MeetButton aria-label="Join a call"><MeetIcon /><Caret /></MeetButton>
      <ShareGroup>
        <ShareButton><MdPublic size={24} />Share</ShareButton>
        <ShareMore aria-label="Share options"><Caret /></ShareMore>
      </ShareGroup>
      <SparkButton aria-label="Ask Gemini"><SparkIcon /></SparkButton>
      <button aria-label="Account"><Avatar $size={42}>M</Avatar></button>
    </Actions>
  </Header>
);

const DocsToolbar = () => (
  <Toolbar>
    <MenuSearch><MdSearch size={26} />Menus</MenuSearch>
    <IconButton $w={42} aria-label="Undo"><UndoIcon /></IconButton>
    <IconButton $w={42} aria-label="Redo"><RedoIcon /></IconButton>
    <IconButton $w={42} aria-label="Print"><MdOutlinePrint size={26} /></IconButton>
    <IconButton $w={42} aria-label="Spelling"><MdSpellcheck size={24} /></IconButton>
    <IconButton $w={42} aria-label="Paint format"><MdOutlineImagesearchRoller size={25} /></IconButton>
    <Zoom>
      <ZoomSelect aria-label="Zoom" defaultValue="100%"><option>100%</option></ZoomSelect>
      <Caret />
    </Zoom>
    <Rule />
    <IconButton $w={50} aria-label="Add comment"><AddCommentIcon /></IconButton>
    <Rule />
    <StyleGroup>
      <StyleButton aria-label="Border colour"><MdOutlineEdit size={20} /><Caret /></StyleButton>
      <StyleButton aria-label="Border weight"><MdLineWeight size={20} viewBox="3 3 18 18" /><Caret /></StyleButton>
      <StyleButton aria-label="Border dash"><MdLineStyle size={20} viewBox="3 3 18 18" /><Caret /></StyleButton>
    </StyleGroup>
    <Rule />
    <ImageTools>
      <IconButton $w={40} aria-label="Crop image"><MdCrop size={26} /></IconButton>
      <IconButton $w={40} aria-label="Reset image"><ResetImageIcon /></IconButton>
    </ImageTools>
    <Rule />
    <TextTool>Image options</TextTool>
    <Rule />
    <TextTool>Replace image</TextTool>
  </Toolbar>
);

const DocsSidebar = () => (
  <Sidebar>
    <BackRow><button aria-label="Close outline"><MdArrowBack size={32} /></button></BackRow>
    <TabsHeading>
      <SidebarTitle>Document tabs</SidebarTitle>
      <button aria-label="Add tab"><MdAdd size={26} /></button>
    </TabsHeading>
    <DocTab>
      <MdOutlineArticle size={25} />
      Tab 1
      <Spacer />
      <button aria-label="Tab options"><MdMoreVert size={26} /></button>
    </DocTab>
    <Outline>
      {outline.map((o) => (
        <OutlineItem key={o.text} $sub={o.sub} $current={o.current}><a href="#section">{o.text}</a></OutlineItem>
      ))}
    </Outline>
  </Sidebar>
);

const AccountDialog = () => (
  <Dialog role="dialog" aria-label="Signed in account">
    <DialogTitle>You're currently signed in as<Email>marina.emil2003@gmail.com</Email></DialogTitle>
    <Account><Avatar $size={43}>M</Avatar>Marina Emil</Account>
    <DialogButtons>
      <DialogButton>Change account</DialogButton>
      <DialogButton $primary>OK</DialogButton>
    </DialogButtons>
  </Dialog>
);

export default function App() {
  return (
    <Desktop>
      <GlobalStyle />
      <Shadow>
        <Window>
          <BrowserTabs />
          <BrowserToolbar />
          <Docs>
            <DocsHeader />
            <DocsToolbar />
            <RulerRow><RulerSlot><Ruler /></RulerSlot></RulerRow>
            <Workspace>
              <DocsSidebar />
              <Page>
                <DocHeading>Promotions and Discounts (Jana)</DocHeading>
                <SequenceDiagram />
              </Page>
            </Workspace>
            <ScrollThumb />
            <SidePanelButton aria-label="Show side panel"><MdChevronLeft size={24} /></SidePanelButton>
            <AccountDialog />
          </Docs>
        </Window>
      </Shadow>
    </Desktop>
  );
}
